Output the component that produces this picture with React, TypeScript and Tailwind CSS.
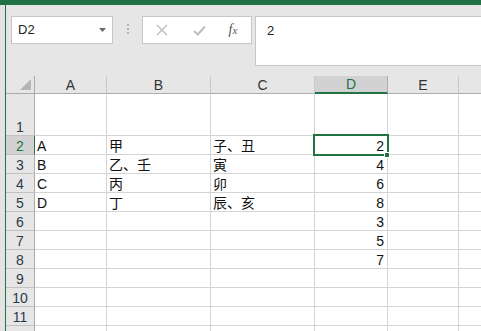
import React from "react";

const COLS = [
  { key: "A", w: "w-[72px]" },
  { key: "B", w: "w-[104px]" },
  { key: "C", w: "w-[104px]" },
  { key: "D", w: "w-[73px]" },
  { key: "E", w: "w-[71px]" },
];

const DATA: Record<number, string[]> = {
  2: ["A", "甲", "子、丑", "2", ""],
  3: ["B", "乙、壬", "寅", "4", ""],
  4: ["C", "丙", "卯", "6", ""],
  5: ["D", "丁", "辰、亥", "8", ""],
  6: ["", "", "", "3", ""],
  7: ["", "", "", "5", ""],
  8: ["", "", "", "7", ""],
};

const ROWS = [1, 2, 3, 4, 5, 6, 7, 8, 9, 10, 11, 12];

export default function App() {
  return (
    <div className="w-[481px] h-[331px] overflow-hidden bg-[#e6e6e6] flex flex-col font-['Liberation_Sans','Noto_Sans_CJK_SC',sans-serif] text-[#222]">
      <div className="h-[5px] shrink-0 bg-[#217346]" />
      <div className="flex flex-1 min-h-0">
        <div className="w-[5px] shrink-0 bg-[#e3e3e3]" />
        <div className="w-[1px] shrink-0 bg-[#217346]" />
        <div className="flex-1 min-w-0 flex flex-col">
          {/* formula bar */}
          <div className="h-[71px] shrink-0 flex items-start pt-[11px] pl-[5px]">
            <div className="w-[102px] h-[28px] bg-white border border-[#c6c6c6] flex items-center justify-between pl-[6px] pr-[6px]">
              <span className="text-[13px] leading-[14px] text-[#222]">D2</span>
              <svg width="7" height="4" viewBox="0 0 7 4">
                <path d="M0 0 H7 L3.5 4 Z" fill="#6b6b6b" />
              </svg>
            </div>
            <div className="ml-[14px] mt-[8px] flex flex-col gap-[2px]">
              <div className="w-[2px] h-[2px] bg-[#b0b0b0]" />
              <div className="w-[2px] h-[2px] bg-[#b0b0b0]" />
              <div className="w-[2px] h-[2px] bg-[#b0b0b0]" />
            </div>
            <div className="ml-[13px] w-[110px] h-[28px] bg-white border border-[#c6c6c6] flex items-center">
              <div className="w-[38px] flex justify-center">
                <svg width="12" height="12" viewBox="0 0 12 12">
                  <path d="M1 1 L11 11 M11 1 L1 11" stroke="#b8b8b8" strokeWidth="1.2" fill="none" />
                </svg>
              </div>
              <div className="w-[36px] flex justify-center">
                <svg width="13" height="11" viewBox="0 0 13 11">
                  <path d="M1 6 L4.8 9.5 L12 1.5" stroke="#bdbdbd" strokeWidth="2" fill="none" />
                </svg>
              </div>
              <div className="w-[32px] flex justify-center">
                <span className="font-['Liberation_Serif',serif] italic text-[14px] leading-[14px] text-[#555]">
                  f<span className="text-[11px]">x</span>
                </span>
              </div>
            </div>
            <div className="ml-[3px] flex-1 h-[50px] bg-white border border-r-0 border-[#c6c6c6] pl-[11px] pt-[7px] text-[13px] leading-[14px] text-[#222]">
              2
            </div>
          </div>

          {/* grid */}
          <div className="relative flex-1 min-h-0 bg-white">
            {/* header row */}
            <div className="flex h-[18px] bg-[#e6e6e6]">
              <div className="w-[29px] shrink-0 border-r border-b border-[#ababab] relative">
                <svg className="absolute right-[3px] bottom-[3px]" width="11" height="11" viewBox="0 0 11 11">
                  <path d="M11 0 L11 11 L0 11 Z" fill="#b5b5b5" />
                </svg>
              </div>
              {COLS.map((c) =>
                c.key === "D" ? (
                  <div
                    key={c.key}
                    className={`${c.w} shrink-0 bg-[#d2d2d2] border-r border-[#ababab] border-b-2 border-b-[#217346] flex items-end justify-center text-[14px] leading-[14px] text-[#217346]`}
                  >
                    <span className="pb-[1px]">{c.key}</span>
                  </div>
                ) : (
                  <div
                    key={c.key}
                    className={`${c.w} shrink-0 border-r border-r-[#c8c8c8] border-b border-b-[#ababab] flex items-end justify-center text-[14px] leading-[14px] text-[#333]`}
                  >
                    <span className="pb-[1px]">{c.key}</span>
                  </div>
                )
              )}
              <div className="flex-1 border-b border-[#ababab]" />
            </div>

            {ROWS.map((r) => {
              const sel = r === 2;
              const vals = DATA[r] || ["", "", "", "", ""];
              return (
                <div key={r} className={`flex ${r === 1 ? "h-[42px]" : "h-[19px]"}`}>
                  <div
                    className={`w-[29px] shrink-0 border-b border-b-[#c2c2c2] border-r ${
                      sel ? "bg-[#d2d2d2] border-r-[#217346] text-[#217346]" : "bg-[#e6e6e6] border-r-[#ababab] text-[#2a3a4a]"
                    } flex items-end justify-center text-[14px] leading-[14px]`}
                  >
                    <span className="pb-[1px]">{r < 12 ? r : ""}</span>
                  </div>
                  {COLS.map((c, i) => (
                    <div
                      key={c.key}
                      className={`${c.w} shrink-0 border-r border-b border-[#d4d4d4] flex items-end ${
                        c.key === "D" ? "justify-end pr-[3px]" : "justify-start pl-[2px]"
                      } text-[14px] leading-[14px] text-[#111] whitespace-nowrap overflow-visible`}
                    >
                      <span className="pb-[1px]">{vals[i]}</span>
                    </div>
                  ))}
                  <div className="flex-1 border-b border-[#d4d4d4]" />
                </div>
              );
            })}

            {/* selection outline */}
            <div className="absolute left-[307px] top-[58px] w-[76px] h-[22px] border-2 border-[#217346] pointer-events-none" />
            <div className="absolute left-[378px] top-[76px] w-[6px] h-[6px] bg-[#217346] border border-white" />
          </div>
        </div>
      </div>
    </div>
  );
}
